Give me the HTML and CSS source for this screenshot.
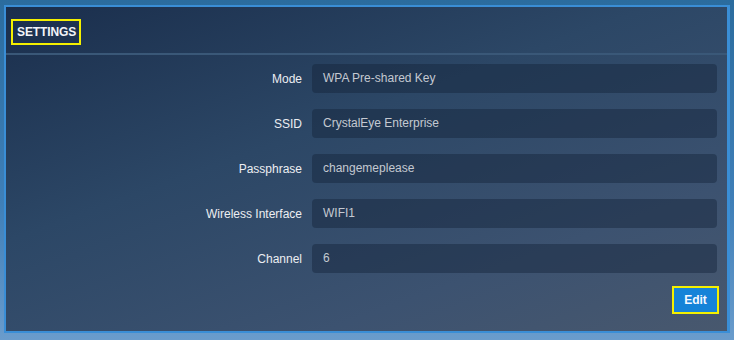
FILE: index.html
```html
<!DOCTYPE html>
<html lang="en">
<head>
  <meta charset="UTF-8">
  <meta name="viewport" content="width=device-width, initial-scale=1.0">
  <title>Settings</title>
  <link rel="stylesheet" href="styles.css">
</head>
<body>
  <section class="panel">
    <header class="panel-head">
      <h2 class="panel-title">SETTINGS</h2>
    </header>
    <form class="settings">
      <div class="row">
        <label for="mode">Mode</label>
        <div class="field" id="mode">WPA Pre-shared Key</div>
      </div>
      <div class="row">
        <label for="ssid">SSID</label>
        <div class="field" id="ssid">CrystalEye Enterprise</div>
      </div>
      <div class="row">
        <label for="pass">Passphrase</label>
        <div class="field" id="pass">changemeplease</div>
      </div>
      <div class="row">
        <label for="iface">Wireless Interface</label>
        <div class="field" id="iface">WIFI1</div>
      </div>
      <div class="row">
        <label for="channel">Channel</label>
        <div class="field" id="channel">6</div>
      </div>
      <div class="actions">
        <button type="button" class="btn-edit">Edit</button>
      </div>
    </form>
  </section>
</body>
</html>
```

FILE: styles.css
```css
html, body {
  height: 100%;
}
body {
  margin: 0;
  padding: 5px 4px 7px 4px;
  box-sizing: border-box;
  font-family: "Liberation Sans", Arial, sans-serif;
  font-size: 12px;
  background: linear-gradient(180deg, #2b6c9e 0%, #3f7fb8 60%, #6a9ccc 100%);
}
.panel {
  height: 100%;
  box-sizing: border-box;
  border: 2px solid #3a8ed6;
  border-right-width: 3px;
  background: linear-gradient(160deg, #1a2e4c 0%, #2c4766 40%, #3c5270 75%, #48586e 100%);
  display: flex;
  flex-direction: column;
}
.panel-head {
  height: 48px;
  border-bottom: 2px solid #3a5878;
  display: flex;
  align-items: center;
  padding: 4px 0 0 5px;
  box-sizing: border-box;
}
.panel-title {
  margin: 0;
  font-size: 12px;
  font-weight: bold;
  color: #f2f4f8;
  border: 2px solid #f4f000;
  padding: 5px 3px 5px 4px;
  line-height: 12px;
  letter-spacing: -0.1px;
}
.settings {
  padding: 9px 10px 0 0;
  display: flex;
  flex-direction: column;
  gap: 16px;
}
.row {
  display: flex;
  align-items: center;
  gap: 10px;
}
.row label {
  width: 296px;
  text-align: right;
  color: #eceef2;
}
.field {
  flex: 1;
  height: 29px;
  line-height: 29px;
  padding: 0 11px;
  border-radius: 4px;
  background: rgba(20, 35, 58, 0.45);
  color: #c4c9d1;
}
.actions {
  display: flex;
  justify-content: flex-end;
  margin-top: -3px;
}
.btn-edit {
  font-family: inherit;
  font-size: 12px;
  font-weight: bold;
  color: #f4f8ff;
  background: #1583d8;
  border: 2px solid #f4f000;
  width: 47px;
  height: 28px;
  margin-right: -2px;
  cursor: pointer;
}
```
